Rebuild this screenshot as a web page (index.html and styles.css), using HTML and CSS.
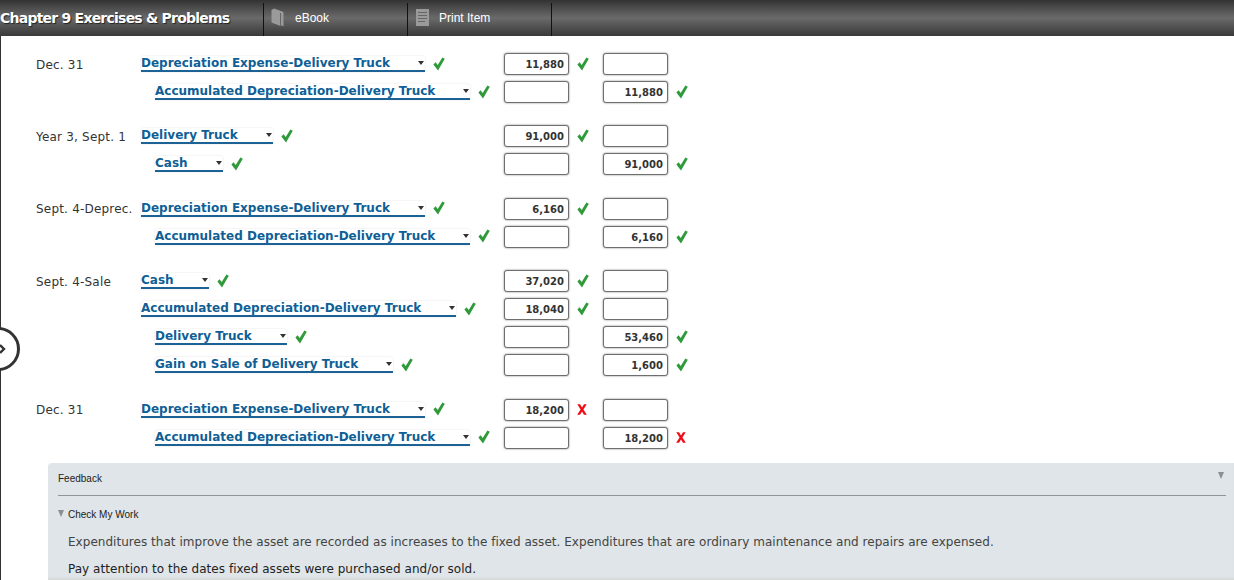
FILE: index.html
```html
<!DOCTYPE html>
<html lang="en">
<head>
<meta charset="utf-8">
<title>Chapter 9 Exercises &amp; Problems</title>
<link rel="stylesheet" href="styles.css">
</head>
<body>
<svg class="defs" width="0" height="0" aria-hidden="true">
  <symbol id="ok" viewBox="0 0 12 14"><path d="M0.4 7.4 L2.6 5.2 L4.7 8 L9.4 0.4 L11.8 1.8 L5 13.4 Z"/></symbol>
  <symbol id="no" viewBox="0 0 10 11"><path d="M0.3 0.3 H3 L5 3.4 L7 0.3 H9.7 L6.4 5.4 L9.8 10.7 H7 L5 7.5 L3 10.7 H0.2 L3.6 5.4 Z"/></symbol>
</svg>
<header class="topbar">
  <h1 class="title">Chapter 9 Exercises &amp; Problems</h1>
  <nav class="tabs">
    <a class="tab">
      <svg class="tab-icon" width="13" height="19" viewBox="0 0 13 19"><path d="M0.5 2 L3 0.5 L12.5 4 V18.5 L10 17 L9.5 18 L0.5 14.5 Z" fill="#9a9a9a"/><path d="M9.5 5 V17.5" stroke="#666" fill="none"/></svg>
      <span>eBook</span>
    </a>
    <a class="tab tab-print">
      <svg class="tab-icon" width="13" height="17" viewBox="0 0 13 17"><rect width="13" height="17" fill="#9a9a9a"/><path d="M2 3.5H11M2 6.5H11M2 9.5H11M2 12.5H9" stroke="#666" stroke-width="1.2"/></svg>
      <span>Print Item</span>
    </a>
  </nav>
</header>
<button class="side-toggle" aria-label="Toggle panel">
  <svg width="8" height="12" viewBox="0 0 8 12"><path d="M1 2 L5 6 L1 10" fill="none" stroke="#333" stroke-width="2.4"/></svg>
</button>
<main class="sheet">
  <section class="entry">
    <div class="row"><div class="date">Dec. 31</div><div class="acct"><span class="sel">Depreciation Expense-Delivery Truck</span><svg class="mark ok"><use href="#ok"/></svg></div><div class="amt"><span class="box">11,880</span><svg class="mark ok"><use href="#ok"/></svg></div><div class="amt"><span class="box"></span></div></div>
    <div class="row"><div class="date"></div><div class="acct credit"><span class="sel">Accumulated Depreciation-Delivery Truck</span><svg class="mark ok"><use href="#ok"/></svg></div><div class="amt"><span class="box"></span></div><div class="amt"><span class="box">11,880</span><svg class="mark ok"><use href="#ok"/></svg></div></div>
  </section>
  <section class="entry">
    <div class="row"><div class="date">Year 3, Sept. 1</div><div class="acct"><span class="sel">Delivery Truck</span><svg class="mark ok"><use href="#ok"/></svg></div><div class="amt"><span class="box">91,000</span><svg class="mark ok"><use href="#ok"/></svg></div><div class="amt"><span class="box"></span></div></div>
    <div class="row"><div class="date"></div><div class="acct credit"><span class="sel">Cash</span><svg class="mark ok"><use href="#ok"/></svg></div><div class="amt"><span class="box"></span></div><div class="amt"><span class="box">91,000</span><svg class="mark ok"><use href="#ok"/></svg></div></div>
  </section>
  <section class="entry">
    <div class="row"><div class="date">Sept. 4-Deprec.</div><div class="acct"><span class="sel">Depreciation Expense-Delivery Truck</span><svg class="mark ok"><use href="#ok"/></svg></div><div class="amt"><span class="box">6,160</span><svg class="mark ok"><use href="#ok"/></svg></div><div class="amt"><span class="box"></span></div></div>
    <div class="row"><div class="date"></div><div class="acct credit"><span class="sel">Accumulated Depreciation-Delivery Truck</span><svg class="mark ok"><use href="#ok"/></svg></div><div class="amt"><span class="box"></span></div><div class="amt"><span class="box">6,160</span><svg class="mark ok"><use href="#ok"/></svg></div></div>
  </section>
  <section class="entry">
    <div class="row"><div class="date">Sept. 4-Sale</div><div class="acct"><span class="sel">Cash</span><svg class="mark ok"><use href="#ok"/></svg></div><div class="amt"><span class="box">37,020</span><svg class="mark ok"><use href="#ok"/></svg></div><div class="amt"><span class="box"></span></div></div>
    <div class="row"><div class="date"></div><div class="acct"><span class="sel">Accumulated Depreciation-Delivery Truck</span><svg class="mark ok"><use href="#ok"/></svg></div><div class="amt"><span class="box">18,040</span><svg class="mark ok"><use href="#ok"/></svg></div><div class="amt"><span class="box"></span></div></div>
    <div class="row"><div class="date"></div><div class="acct credit"><span class="sel">Delivery Truck</span><svg class="mark ok"><use href="#ok"/></svg></div><div class="amt"><span class="box"></span></div><div class="amt"><span class="box">53,460</span><svg class="mark ok"><use href="#ok"/></svg></div></div>
    <div class="row"><div class="date"></div><div class="acct credit"><span class="sel">Gain on Sale of Delivery Truck</span><svg class="mark ok"><use href="#ok"/></svg></div><div class="amt"><span class="box"></span></div><div class="amt"><span class="box">1,600</span><svg class="mark ok"><use href="#ok"/></svg></div></div>
  </section>
  <section class="entry">
    <div class="row"><div class="date">Dec. 31</div><div class="acct"><span class="sel">Depreciation Expense-Delivery Truck</span><svg class="mark ok"><use href="#ok"/></svg></div><div class="amt"><span class="box">18,200</span><svg class="mark no"><use href="#no"/></svg></div><div class="amt"><span class="box"></span></div></div>
    <div class="row"><div class="date"></div><div class="acct credit"><span class="sel">Accumulated Depreciation-Delivery Truck</span><svg class="mark ok"><use href="#ok"/></svg></div><div class="amt"><span class="box"></span></div><div class="amt"><span class="box">18,200</span><svg class="mark no"><use href="#no"/></svg></div></div>
  </section>
  <section class="feedback">
    <div class="fb-head"><span>Feedback</span><i class="tri fb-toggle"></i></div>
    <div class="fb-sub"><i class="tri"></i><span>Check My Work</span></div>
    <p class="fb-text">Expenditures that improve the asset are recorded as increases to the fixed asset. Expenditures that are ordinary maintenance and repairs are expensed.</p>
    <p class="fb-text">Pay attention to the dates fixed assets were purchased and/or sold.</p>
  </section>
</main>
</body>
</html>
```
FILE: styles.css
```css
* { box-sizing: border-box; }
html, body { margin: 0; height: 580px; overflow: hidden; background: #fff; }
body { font-family: "DejaVu Sans", Verdana, sans-serif; color: #333; position: relative; }
.defs { position: absolute; }

.topbar {
  height: 36px;
  display: flex;
  align-items: stretch;
  background: linear-gradient(#323232 0, #4a4a4a 20%, #6a6a6a 50%, #4c4c4c 80%, #3a3a3a 100%);
}
.title {
  margin: 0;
  width: 263px;
  flex: none;
  font: bold 14px/36px "DejaVu Sans", sans-serif;
  color: #fff;
  text-shadow: 1px 1px 1px #222;
  white-space: nowrap;
  letter-spacing: -0.77px;
}
.tabs { display: flex; padding-top: 3px; }
.tab {
  width: 144px;
  display: flex;
  align-items: center;
  gap: 11px;
  padding: 0 0 4px 7px;
  border-left: 1px solid #111;
  font: 12px "Liberation Sans", Arial, sans-serif;
  color: #fff;
}
.tab-print { width: 145px; gap: 10px; padding-left: 8px; border-right: 1px solid #111; }
.tab-icon { flex: none; }

.side-toggle {
  position: absolute;
  left: -24px;
  top: 327px;
  width: 44px;
  height: 44px;
  padding: 0 0 0 20px;
  display: flex;
  align-items: center;
  border: 3px solid #333;
  border-radius: 50%;
  background: #fff;
}

.sheet {
  height: 544px;
  padding-top: 17px;
  border-left: 1px solid #333;
  font-size: 12px;
}
.entry { display: flex; flex-direction: column; gap: 6px; margin-bottom: 22.4px; }
.entry:nth-of-type(5) { margin-bottom: 14px; }
.row { display: grid; grid-template-columns: 35px 105px 363px 99px 1fr; height: 22px; align-items: center; }
.date { grid-column: 2; white-space: nowrap; color: #333; letter-spacing: 0.2px; padding-top: 1px; }
.acct { display: flex; align-items: center; gap: 8px; height: 22px; margin-top: -1px; }
.acct.credit { padding-left: 14px; }
.sel {
  position: relative;
  display: block;
  margin-top: 1px;
  padding-right: 35px;
  font-size: 12px;
  font-weight: bold;
  line-height: 14px;
  color: #0f5f96;
  white-space: nowrap;
  border-bottom: 2px solid #1d6295;
  border-radius: 3px 3px 0 0;
  box-shadow: 0 0 2px #ddd;
}
.sel::after {
  content: "";
  position: absolute;
  right: 1px;
  top: 5px;
  border: 3.5px solid transparent;
  border-top: 4px solid #333;
  border-bottom: 0;
}
.mark { flex: none; width: 12px; height: 14px; }
.ok { fill: #2f9a3a; }
.no { fill: #f00a14; width: 10px; height: 11px; }
.amt { display: flex; align-items: center; gap: 8px; }
.box {
  flex: none;
  width: 65px;
  height: 22px;
  padding: 0 4px;
  border: 1px solid #6e6e6e;
  border-radius: 3px;
  box-shadow: 0 0 2px #777;
  background: #fff;
  text-align: right;
  font-size: 10px;
  font-weight: bold;
  line-height: 21px;
  color: #333;
}

.feedback {
  margin-left: 47px;
  height: 117px;
  padding: 0 8px 0 10px;
  background: #dfe5e8;
  border-radius: 4px 0 0 0;
  box-shadow: inset 0 -3px 2px -1px #d6dad9;
  overflow: hidden;
}
.fb-head {
  display: flex;
  justify-content: space-between;
  height: 33px;
  padding: 10px 0 0;
  border-bottom: 1px solid #8e9698;
  font: 10px/11px "Liberation Sans", Arial, sans-serif;
  color: #222;
}
.tri {
  display: block;
  width: 0;
  height: 0;
  border: 3.5px solid transparent;
  border-top: 7px solid #8a8f90;
  border-bottom: 0;
}
.fb-toggle { margin: -1px 2px 0 0; }
.fb-sub {
  display: flex;
  align-items: center;
  gap: 4px;
  height: 11px;
  margin-top: 13px;
  font: 10px/11px "Liberation Sans", Arial, sans-serif;
  color: #222;
}
.fb-sub .tri { margin-top: -2px; }
.fb-text { margin: 15px 0 0 10px; font-size: 12px; line-height: 15px; white-space: nowrap; color: #444; letter-spacing: 0.033px; }
.fb-text + .fb-text { margin-top: 12px; color: #222; }
```
